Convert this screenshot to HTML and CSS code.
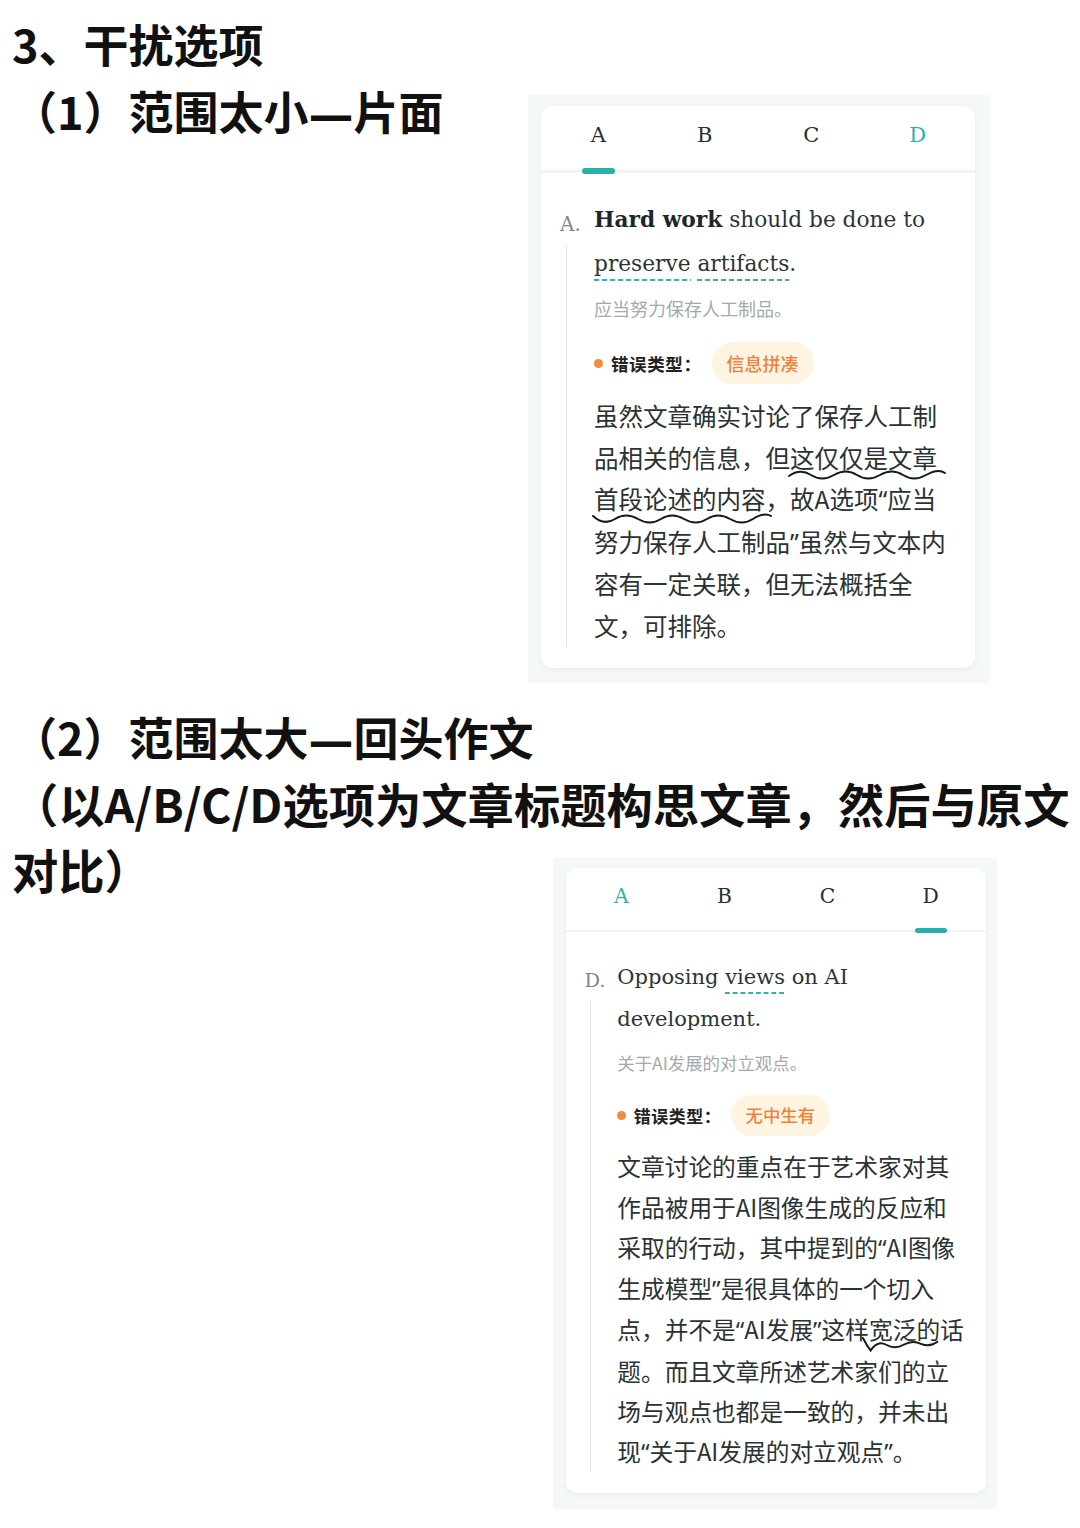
FILE: index.html
```html
<!DOCTYPE html>
<html lang="zh-CN">
<head>
    <meta charset="UTF-8">
    <meta name="viewport" content="width=device-width, initial-scale=1.0">
    <title>干扰选项</title>
    <link rel="stylesheet" href="styles.css">
</head>
<body>
    <div class="page">
        <!-- 范围太小 -->
        <section class="part">
            <div class="heading">
                <h1 class="title">3、干扰选项</h1>
                <h2 class="title">（1）范围太小<span class="bar">—</span>片面</h2>
            </div>
            <div class="shot shot-a">
                <div class="card">
                    <div class="tabs">
                        <span class="tab active">A</span>
                        <span class="tab">B</span>
                        <span class="tab">C</span>
                        <span class="tab answer">D</span>
                    </div>
                    <div class="option">
                        <div class="marker">
                            <span class="letter">A.</span>
                            <span class="rule"></span>
                        </div>
                        <div class="body">
                            <p class="en"><b>Hard work</b> should be done to<br><span class="dash">preserve</span> <span class="dash">artifacts</span>.</p>
                            <p class="zh">应当努力保存人工制品。</p>
                            <div class="error">
                                <span class="dot"></span>
                                <span class="error-label">错误类型：</span>
                                <span class="pill">信息拼凑</span>
                            </div>
                            <p class="note">
                                虽然文章确实讨论了保存人工制<br>
                                品相关的信息，但<span class="wave">这仅仅是文章<svg class="squiggle sq-1" width="158" height="16" viewBox="0 0 158 16"><path d="M1 9 Q12 1 23 8 T46 8 T69 8 T92 8 T115 8 T138 8 T157 6"/></svg></span><br>
                                <span class="wave">首段论述的内容<svg class="squiggle sq-2" width="180" height="16" viewBox="0 0 180 16"><path d="M1 5 Q12 15 23 8 T46 8 T69 8 T92 8 T115 8 T138 8 T161 8 T179 5"/></svg></span>，故A选项<span class="q">“</span>应当<br>
                                努力保存人工制品<span class="q">”</span>虽然与文本内<br>
                                容有一定关联，但无法概括全<br>
                                文，可排除。
                            </p>
                        </div>
                    </div>
                </div>
            </div>
        </section>

        <!-- 范围太大 -->
        <section class="part part-b">
            <div class="heading heading-b">
                <h2 class="title">（2）范围太大<span class="bar">—</span>回头作文</h2>
                <p class="title wide">（以A/B/C/D选项为文章标题构思文章，然后与原文<br>对比）</p>
            </div>
            <div class="shot shot-b">
                <div class="card">
                    <div class="tabs">
                        <span class="tab answer">A</span>
                        <span class="tab">B</span>
                        <span class="tab">C</span>
                        <span class="tab active">D</span>
                    </div>
                    <div class="option">
                        <div class="marker">
                            <span class="letter">D.</span>
                            <span class="rule"></span>
                        </div>
                        <div class="body">
                            <p class="en">Opposing <span class="dash">views</span> on AI<br>development.</p>
                            <p class="zh">关于AI发展的对立观点。</p>
                            <div class="error">
                                <span class="dot"></span>
                                <span class="error-label">错误类型：</span>
                                <span class="pill">无中生有</span>
                            </div>
                            <p class="note">
                                文章讨论的重点在于艺术家对其<br>
                                作品被用于AI图像生成的反应和<br>
                                采取的行动，其中提到的<span class="q">“</span>AI图像<br>
                                生成模型<span class="q">”</span>是很具体的一个切入<br>
                                点，并不是<span class="q">“</span>AI发展<span class="q">”</span>这样<span class="wave">宽泛<svg class="squiggle sq-3" width="80" height="18" viewBox="0 0 80 18"><path d="M2 1 Q6 9 10 14 Q17 3 26 8 T44 8 T62 7 T79 5"/></svg></span>的话<br>
                                题。而且文章所述艺术家们的立<br>
                                场与观点也都是一致的，并未出<br>
                                现<span class="q">“</span>关于AI发展的对立观点<span class="q">”</span>。
                            </p>
                        </div>
                    </div>
                </div>
            </div>
        </section>
    </div>
</body>
</html>
```

FILE: styles.css
```css
/* page */
body {
    margin: 0;
    background-color: #fff;
    font-family: "Noto Sans CJK SC", "Noto Sans", sans-serif;
    color: #111;
}

.page {
    padding-top: 10px;
}

.heading {
    padding-left: 12px;
}

.title {
    margin: 0;
    font-size: 45px;
    line-height: 67px;
    font-weight: 700;
    color: #111;
}

.title .bar {
    font-family: "DejaVu Sans", sans-serif;
    line-height: 1;
}

.heading-b .title {
    line-height: 66px;
}

.heading-b .wide {
    font-size: 46.3px;
}

.part-b {
    margin-top: 21px;
}

/* screenshot frame */
.shot {
    background-color: #f5f8f8;
    padding: 11px 15px 15px 13px;
    width: max-content;
}

.shot-a {
    margin-left: 528px;
    margin-top: -49px;
}

.shot-b {
    margin-left: 553px;
    margin-top: -44px;
    padding: 10px 11px 16px 13px;
}

.shot-b .card {
    zoom: 0.968;
}

.card {
    width: 434px;
    background-color: #fff;
    border-radius: 12px;
    box-shadow: 0 2px 6px rgba(0, 0, 0, 0.05);
    overflow: hidden;
}

/* tabs */
.tabs {
    display: grid;
    grid-template-columns: repeat(4, 1fr);
    padding: 0 4px;
    height: 64px;
    border-bottom: 3px solid #f1f4f4;
}

.tab {
    position: relative;
    display: flex;
    align-items: center;
    justify-content: center;
    padding-bottom: 6px;
    font-family: "DejaVu Serif", serif;
    font-size: 21px;
    color: #243030;
}

.tab.answer {
    color: #2db3ad;
}

.tab.active::after {
    content: "";
    position: absolute;
    bottom: -4px;
    left: 50%;
    width: 33px;
    height: 6px;
    margin-left: -16px;
    border-radius: 3px;
    background-color: #26b1ab;
}

/* option */
.option {
    display: flex;
    padding: 25px 20px 21px 19px;
}

.marker {
    display: flex;
    flex-direction: column;
    width: 34px;
    flex-shrink: 0;
}

.letter {
    font-family: "DejaVu Serif", serif;
    font-size: 20px;
    line-height: 44px;
    color: #7d8585;
    padding-top: 4px;
}

.rule {
    flex: 1;
    width: 1px;
    margin-left: 6px;
    margin-top: -1px;
    background-color: #e3e6e6;
}

.body {
    flex: 1;
}

.en {
    margin: 0;
    font-family: "DejaVu Serif", serif;
    font-size: 21.7px;
    line-height: 44px;
    color: #2b3535;
}

.en b {
    color: #1c2828;
}

.dash {
    padding-bottom: 5px;
    background: linear-gradient(to right, #35b0aa 62%, transparent 0) left bottom / 8px 2px repeat-x;
}

.zh {
    margin: 7px 0 0;
    font-size: 18px;
    line-height: 30px;
    color: #a4aaaa;
}

.error {
    display: flex;
    align-items: center;
    margin-top: 19px;
    height: 42px;
}

.dot {
    width: 9px;
    height: 9px;
    border-radius: 50%;
    background-color: #f38a3e;
    margin-right: 8px;
}

.error-label {
    font-size: 17.5px;
    letter-spacing: 0.6px;
    font-weight: 700;
    color: #222;
}

.pill {
    margin-left: 10px;
    padding: 0 15px;
    height: 42px;
    line-height: 42px;
    border-radius: 21px;
    background-color: #fff4e2;
    color: #f2803a;
    font-size: 18px;
    font-weight: 500;
}

.note {
    margin: 11px 0 0;
    font-size: 24.5px;
    line-height: 41.6px;
    color: #2a3333;
    white-space: nowrap;
}

.note .q {
    font-family: "Noto Sans", sans-serif;
}

/* hand-drawn wavy marks */
.wave {
    position: relative;
}

.squiggle {
    position: absolute;
    left: -2px;
    top: 50%;
    margin-top: 10px;
    overflow: visible;
}

.squiggle path {
    fill: none;
    stroke: #151a1a;
    stroke-width: 2;
    stroke-linecap: round;
}

.sq-2 {
    margin-top: 12px;
}

.sq-3 {
    left: -8px;
    margin-top: 8px;
}
```
